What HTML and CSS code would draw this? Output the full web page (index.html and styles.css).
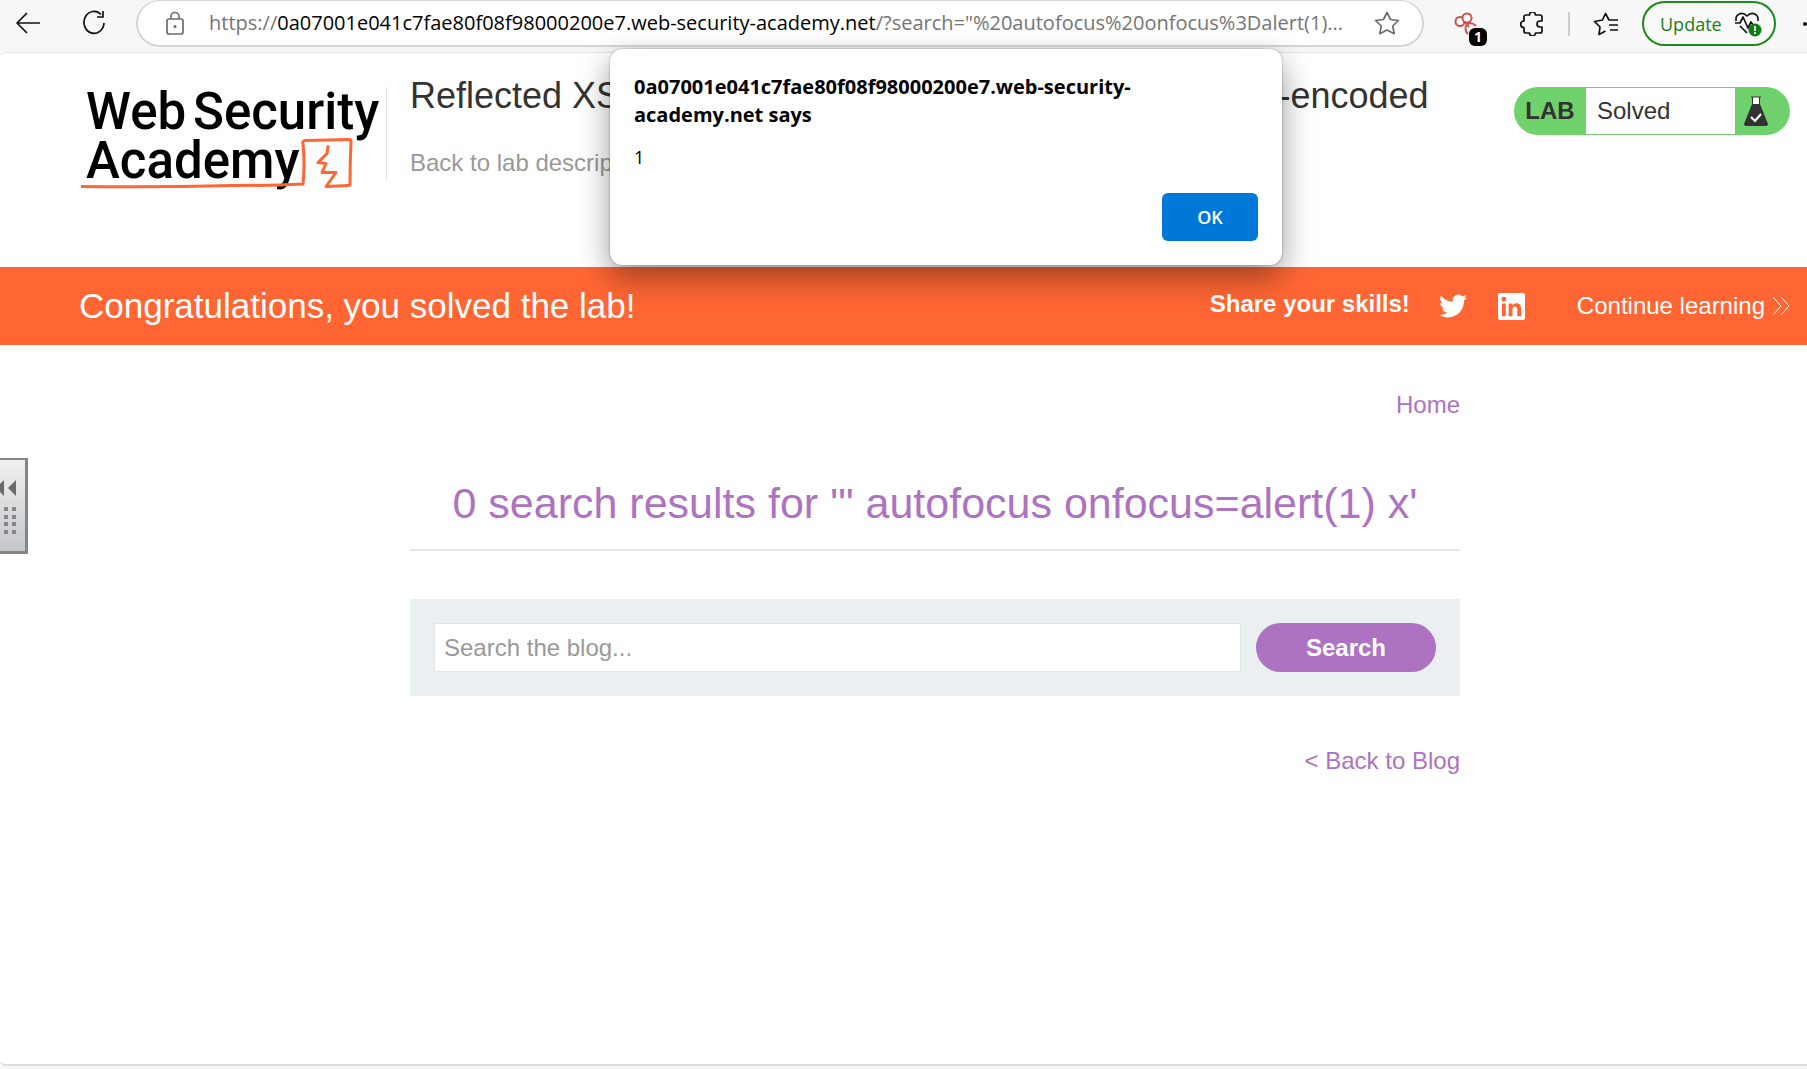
FILE: index.html
```
<!DOCTYPE html>
<html lang="en">
<head>
<meta charset="utf-8">
<title>Reflected XSS into attribute with angle brackets HTML-encoded</title>
<link rel="stylesheet" href="styles.css">
</head>
<body>
<div class="toolbar">
  <button class="tool" aria-label="Back"><svg width="24" height="24" viewBox="0 0 24 24"><path d="M24 12H1M11 2 1 12l10 10"/></svg></button>
  <button class="tool tool-reload" aria-label="Refresh"><svg width="24" height="26" viewBox="0 0 24 26"><path d="M22 13a10 11 0 1 1-3-8.500M21 1v6h-6"/></svg></button>
  <div class="address">
    <svg class="lock" width="18" height="24" viewBox="0 0 18 24"><rect x="1" y="8" width="16" height="15" rx="2"/><path d="M5 8V5.500a4 4 0 0 1 8 0V8"/><circle cx="9" cy="15.500" r="1.500" class="fill"/></svg>
    <span class="url">https://<b>0a07001e041c7fae80f08f98000200e7.web-security-academy.net</b>/?search="%20autofocus%20onfocus%3Dalert(1)...</span>
    <button class="star" aria-label="Add to favorites"><svg width="26" height="24" viewBox="0 0 26 24"><path d="M13 1.500 16.500 8.500 24.500 9.500 18.700 15 20.200 22.700 13 19 5.800 22.700 7.300 15 1.500 9.500 9.500 8.500z"/></svg></button>
  </div>
  <div class="actions">
    <button class="tool tool-ext" aria-label="Extension"><svg width="24" height="24" viewBox="0 0 24 24"><g class="knot"><path d="M22 14c-4-4-9-3-10 0-1 3 0 6 2 8M11 10l4 5"/><circle cx="6" cy="9.500" r="4.500"/><circle cx="13" cy="6" r="4.500"/></g></svg><span class="badge">1</span></button>
    <button class="tool tool-puzzle" aria-label="Extensions"><svg width="24" height="24" viewBox="0 0 24 24"><path d="M4 5q0-2 2-2h3.500a3 3 0 0 1 6 0H20q2 0 2 2v4h-2a3 3 0 0 0 0 6h2v4q0 2-2 2h-4.500a3 3 0 0 1-6 0H6q-2 0-2-2v-3.500a3.200 3.200 0 0 1 0-6.500z"/></svg></button>
    <span class="separator"></span>
    <button class="tool tool-favs" aria-label="Favorites"><svg width="26" height="24" viewBox="0 0 26 24"><path d="M18 8h-2L12.500 1.500 9.500 8l-8 1.500L7 15 6 22.500l6.500-3.500M17 8h8M16 13h9M17 18h8"/></svg></button>
    <button class="update">Update <svg width="28" height="26" viewBox="0 0 28 26"><path d="M2 10C1 3 8 0 13 5c5-5 12-2 11 5M1 12h5l3-6 5 11 3-6 2 3M6 15l7 7"/><circle cx="21" cy="19" r="6.500" class="alert"/><path class="mark" d="M21 15v5M21 21v2"/></svg></button>
    <span class="dot"></span>
  </div>
</div>

<div class="page">
  <header class="lab-header">
    <a class="logo" href="#" aria-label="Web Security Academy">
      <svg width="300" height="108" viewBox="0 0 300 108">
        <text x="5" y="45">Web</text><text x="112" y="45">Security</text><text x="5" y="94">Academy</text>
        <path class="ink" d="M1 102.500q75 1 150-1 40 0 71-1.500M222 100q2-20 0-40-1-3 2-3.500l44-1q2 0 2 2-1 20-1 42 0 2-2 2l-22 1 10-14-14 0 4-9-8-1 9-9 1-7"/>
      </svg>
    </a>
    <div class="lab-title">
      <h2>Reflected XSS into attribute with angle brackets HTML-encoded</h2>
      <a href="#">Back to lab description</a>
    </div>
    <div class="lab-status">
      <span class="lab-tag">LAB</span>
      <span class="lab-state">Solved</span>
      <svg width="24" height="32" viewBox="0 0 24 32"><path class="neck" d="M8.500 2h7v8h-7z"/><path class="glass" d="M8.500 2v8M15.500 2v8M7 2h10"/><path class="flask" d="M8 9h8l8 20q0 2-2 2H2q-2 0-2-2z"/><path class="check" d="m7 22 4 4 6-7"/></svg>
    </div>
  </header>

  <section class="banner">
    <p class="congrats">Congratulations, you solved the lab!</p>
    <p class="share">Share your skills!</p>
    <a class="twitter" href="#" aria-label="Twitter"><svg width="28" height="28" viewBox="0 0 24 24"><path d="M23.950 4.570a10 10 0 0 1-2.820.77 4.960 4.960 0 0 0 2.160-2.720c-.95.550-2 .95-3.130 1.180a4.920 4.920 0 0 0-8.380 4.480C7.690 8.090 4.070 6.130 1.640 3.160a4.920 4.920 0 0 0 1.520 6.570 4.900 4.900 0 0 1-2.230-.61v.06c0 2.390 1.700 4.380 3.950 4.830a5 5 0 0 1-2.210.08 4.930 4.930 0 0 0 4.600 3.420A9.870 9.870 0 0 1 0 19.540a13.990 13.990 0 0 0 7.550 2.210c9.050 0 14-7.500 14-13.980 0-.21 0-.42-.02-.63a9.940 9.940 0 0 0 2.420-2.570z"/></svg></a>
    <a class="linkedin" href="#" aria-label="LinkedIn"><svg width="27" height="27" viewBox="0 0 28 28"><path fill-rule="evenodd" d="M2 0h24q2 0 2 2v24q0 2-2 2H2q-2 0-2-2V2q0-2 2-2zM4 11v13h4V11zM6 4a2.300 2.300 0 1 0 0 5 2.300 2.300 0 0 0 0-5zM11 11v13h4v-7c0-4 5-4 5 0v7h4v-8c0-6-6-7-9-3v-2z"/></svg></a>
    <a class="continue" href="#">Continue learning <svg width="18" height="20" viewBox="0 0 18 20"><path d="m1 1 8 9-8 9M9 1l8 9-8 9"/></svg></a>
  </section>

  <main class="blog">
    <nav class="right"><a href="#">Home</a></nav>
    <h1>0 search results for '" autofocus onfocus=alert(1) x'</h1>
    <form class="search">
      <input type="text" placeholder="Search the blog..." aria-label="Search the blog">
      <button type="button">Search</button>
    </form>
    <div class="right back"><a href="#">&lt; Back to Blog</a></div>
  </main>
</div>

<button class="side-tab" aria-label="Open panel"><svg width="24" height="90" viewBox="0 0 24 90"><path d="M4 19v16l-8-8zM16 19v16l-8-8z"/><path class="dots" d="M-4 48h20M-4 56h20M-4 63h20M-4 71h20"/></svg></button>

<div class="dialog" role="alertdialog" aria-labelledby="dialog-title">
  <h3 id="dialog-title">0a07001e041c7fae80f08f98000200e7.web-security-academy.net says</h3>
  <p>1</p>
  <button>OK</button>
</div>
</body>
</html>
```
FILE: styles.css
```
* { box-sizing: border-box; }
body {
  margin: 0;
  min-height: 100vh;
  display: flex;
  flex-direction: column;
  overflow-x: hidden;
  position: relative;
  background: #f7f7f7;
  color: #333332;
  font-family: "Liberation Sans", Arial, sans-serif;
  font-size: 24px;
  line-height: 28px;
}
h1, h2, h3, p { margin: 0; font-weight: 400; }
a { color: inherit; text-decoration: none; }
button { border: 0; padding: 0; background: none; font: inherit; color: inherit; }
svg { display: block; }

/* Browser toolbar */
.toolbar {
  display: flex;
  height: 52px;
  padding-left: 16px;
  font-family: "Open Sans", "Noto Sans", sans-serif;
  font-size: 20px;
}
.toolbar svg { fill: none; stroke: #111; stroke-width: 1.7; stroke-linejoin: round; }
.tool { position: relative; width: 24px; height: 46px; display: flex; align-items: center; }
.tool-reload { margin: 0 44px 0 42px; }
.address {
  flex: 1;
  min-width: 0;
  height: 47px;
  display: flex;
  align-items: center;
  padding: 0 22px 0 28px;
  margin-left: -14px;
  border: 2px solid #d5d5d5;
  border-top-width: 1px;
  border-radius: 24px;
  background: #fff;
}
.toolbar .address svg { stroke: #6d6d6d; }
.toolbar .lock .fill { fill: #6d6d6d; stroke: none; }
.url { flex: 1; margin-left: 25px; white-space: nowrap; overflow: hidden; color: #757575; }
.url b { font-weight: 400; color: #000; }
.actions { display: flex; align-items: center; height: 47px; padding-left: 30px; }
.toolbar .knot { fill: #fff; stroke: #d05050; stroke-width: 2; }
.toolbar .knot path { fill: none; }
.badge {
  position: absolute;
  left: 15px;
  top: 27px;
  width: 18px;
  height: 18px;
  border-radius: 6px;
  background: #000;
  color: #fff;
  font-size: 14px;
  font-weight: 700;
  line-height: 18px;
  text-align: center;
}
.tool-puzzle { margin-left: 42px; }
.separator { width: 2px; height: 24px; margin: 0 23px 0 24px; background: #ccc; }
.tool-favs { width: 26px; }
.update {
  display: flex;
  align-items: center;
  justify-content: space-between;
  width: 134px;
  height: 45px;
  margin: 0 27px 0 23px;
  padding: 0 12px 0 16px;
  border: 2px solid #1a8a1a;
  border-radius: 23px;
  background: #f9f9f9;
  color: #1a7f1a;
  font-size: 18px;
}
.toolbar .alert { fill: #107c10; stroke: none; }
.toolbar .mark { stroke: #fff; }
.dot { width: 4px; height: 4px; border-radius: 2px; background: #111; }

/* Page */
.page {
  flex: 1;
  margin-bottom: 3px;
  border-top: 1px solid #e6e6e6;
  border-bottom: 2px solid #dedede;
  border-radius: 6px 0 0 6px;
  background: #fff;
}
.lab-header { display: flex; align-items: flex-start; padding: 31px 17px 0 81px; height: 214px; }
.logo { width: 305px; height: 95px; }
.logo text { font: 500 51px Roboto, sans-serif; fill: #000; }
.ink { fill: none; stroke: #ff6633; stroke-width: 3; stroke-linejoin: round; stroke-linecap: round; }
.lab-title { flex: 1; min-width: 0; margin-top: 3px; padding-left: 23px; border-left: 1px solid #e2e2e2; height: 93px; white-space: nowrap; }
.lab-title h2 { margin-top: -11px; font-size: 36px; line-height: 40px; }
.lab-title a { display: block; margin-top: 33px; color: #999; }
.lab-status {
  display: flex;
  align-items: center;
  width: 276px;
  height: 48px;
  margin-top: 3px;
  border-radius: 24px;
  background: #70d26d;
}
.lab-tag { width: 72px; text-align: center; font-weight: 700; }
.lab-state { width: 149px; height: 46px; margin-right: 9px; padding-left: 11px; background: #fff; line-height: 46px; }
.neck { fill: #fff; }
.glass { fill: none; stroke: #333332; stroke-width: 1; }
.flask { fill: #333332; }
.check { fill: none; stroke: #fff; stroke-width: 2; }

.banner { display: flex; align-items: center; height: 78px; padding: 0 17px 0 79px; background: #ff6633; color: #fff; }
.banner svg { fill: #fff; }
.congrats { flex: 1; font-size: 35px; line-height: 40px; }
.share { margin: 0 29px 4px 0; font-weight: 700; }
.linkedin { margin: 0 52px 0 31px; }
.continue { display: flex; align-items: center; gap: 7px; }
.continue svg { fill: none; stroke: #fff; stroke-width: 1; }

.blog { width: 1113px; max-width: 100%; margin: 0 auto; padding: 46px 0 0 63px; color: #ad73c2; }
.right { text-align: right; }
.blog h1 { margin: 54px 0 48px; padding-bottom: 16px; border-bottom: 2px solid #e6e6e6; font-size: 43px; line-height: 60px; text-align: center; }
.search { display: flex; gap: 15px; padding: 24px; background: #eaeff2; }
.search input { flex: 1; min-width: 0; height: 49px; padding: 0 9px; border: 1px solid #e1e5e7; background: #fff; color: #333332; font: inherit; }
.search input::placeholder { color: #999; opacity: 1; }
.search button { width: 180px; border-radius: 25px; background: #ad73c2; color: #fff; font-weight: 700; }
.back { margin-top: 51px; }

/* Panel handle at the window edge */
.side-tab {
  position: absolute;
  left: 0;
  top: 458px;
  width: 28px;
  height: 96px;
  border: 3px solid #858585;
  border-left: 0;
  border-top-width: 2px;
  background: linear-gradient(#f0f0f0, #c4c8cc);
}
.side-tab svg { fill: #6a6a6a; }
.side-tab .dots { stroke: #858585; stroke-width: 4; stroke-dasharray: 4; }

/* Script alert */
.dialog {
  position: absolute;
  left: 610px;
  top: 49px;
  width: 672px;
  padding: 24px;
  border-radius: 12px;
  background: #fff;
  box-shadow: 0 0 2px rgba(0, 0, 0, .4), 0 12px 32px rgba(0, 0, 0, .4);
  color: #000;
  font-family: "Open Sans", "Noto Sans", sans-serif;
  font-size: 18px;
}
.dialog h3 { width: 540px; font-size: 20px; font-weight: 700; }
.dialog p { margin: 14px 0 22px; }
.dialog button { display: block; width: 96px; height: 48px; margin-left: auto; border-radius: 6px; background: #0078d7; color: #fff; font-size: 18px; font-weight: 600; }
```
